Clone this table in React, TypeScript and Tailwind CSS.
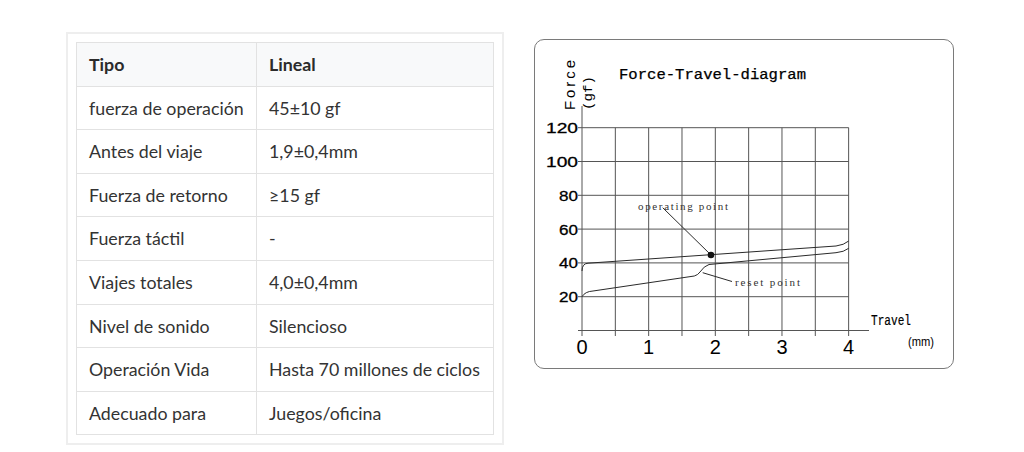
const rows: [string, string][] = [
  ["fuerza de operación", "45±10 gf"],
  ["Antes del viaje", "1,9±0,4mm"],
  ["Fuerza de retorno", "≥15 gf"],
  ["Fuerza táctil", "-"],
  ["Viajes totales", "4,0±0,4mm"],
  ["Nivel de sonido", "Silencioso"],
  ["Operación Vida", "Hasta 70 millones de ciclos"],
  ["Adecuado para", "Juegos/oficina"],
];

const gx = [0, 1, 2, 3, 4, 5, 6, 7, 8].map((i) => 47 + i * 33.33);
const yv = (v: number) => 290.5 - v * 1.69;

function Diagram() {
  return (
    <svg width="418" height="328" viewBox="0 0 418 328" className="block">
      {/* grid */}
      <g stroke="#555" strokeWidth="1" fill="none">
        {gx.map((x) => (
          <line key={x} x1={x} y1={x === 47 ? 66 : 87.7} x2={x} y2={296} />
        ))}
        {[20, 40, 60, 80, 100, 120].map((v) => (
          <line key={v} x1={43} y1={yv(v)} x2={313.7} y2={yv(v)} />
        ))}
        <line x1={43} y1={290.5} x2={334} y2={290.5} />
      </g>

      {/* curves */}
      <g stroke="#2a2a2a" strokeWidth="1" fill="none">
        <path d="M47 231 Q47 223.6 53 223.2 L301 206 Q309 205 313.7 201" />
        <path d="M47 256.7 Q50 251.5 58 251 L159.3 236 Q163 235 165 232 Q169 226 174 224.5 L301 212.7 Q309 212 313.7 208.3" />
        <line x1={127.7} y1={167.7} x2={176} y2={215} />
        <line x1={167.7} y1={232.7} x2={197} y2={241.5} />
      </g>
      <circle cx={176} cy={215} r={3.3} fill="#111" />

      {/* y labels */}
      <g fontFamily="'Liberation Sans', Arial, sans-serif" fontSize="15.5" fill="#000" stroke="#000" strokeWidth="0.3" textAnchor="end">
        {[20, 40, 60, 80, 100, 120].map((v) => (
          <text key={v} x={43} y={yv(v) + 5.4} textLength={v >= 100 ? 32 : 19} lengthAdjust="spacingAndGlyphs">
            {v}
          </text>
        ))}
      </g>

      {/* x labels */}
      <g fontFamily="'Liberation Sans', Arial, sans-serif" fontSize="20" fill="#000" textAnchor="middle">
        {[0, 1, 2, 3, 4].map((n) => (
          <text key={n} x={47 + n * 66.67} y={314}>
            {n}
          </text>
        ))}
      </g>

      {/* titles */}
      <text x={84} y={38.7} fontFamily="'Liberation Mono', monospace" fontSize="14.5" fill="#000" stroke="#000" strokeWidth="0.25" textLength={187} lengthAdjust="spacingAndGlyphs">
        Force-Travel-diagram
      </text>
      <text transform="translate(39.5 70) rotate(-90)" fontFamily="'Liberation Sans', Arial, sans-serif" fontSize="15" fill="#000" textLength={50} lengthAdjust="spacing">
        Force
      </text>
      <text transform="translate(56.5 70) rotate(-90)" fontFamily="'Liberation Mono', monospace" fontSize="13" fill="#000" textLength={34} lengthAdjust="spacingAndGlyphs">
        (gf)
      </text>
      <text x={336} y={285} fontFamily="'Liberation Mono', monospace" fontSize="14.5" fill="#000" stroke="#000" strokeWidth="0.2" textLength={40} lengthAdjust="spacingAndGlyphs">
        Travel
      </text>
      <text x={373} y={306} fontFamily="'Liberation Sans', Arial, sans-serif" fontSize="12" fill="#000" textLength={26} lengthAdjust="spacingAndGlyphs">
        (mm)
      </text>
      <text x={103} y={170} fontFamily="'Liberation Serif', serif" fontSize="11" fill="#333" textLength={90} lengthAdjust="spacing">
        operating point
      </text>
      <text x={200} y={246} fontFamily="'Liberation Serif', serif" fontSize="11" fill="#333" textLength={65} lengthAdjust="spacing">
        reset point
      </text>
    </svg>
  );
}

export default function App() {
  return (
    <div className="w-[1024px] h-[452px] bg-white flex items-start gap-[30px] pl-[66px] pt-[32px] font-['Lato',sans-serif] text-[17.8px] text-[#333]">
      {/* Spec table */}
      <div className="border-2 border-[#eeeeee] p-2">
        <div className="w-[418px] border border-[#e2e2e2]">
          <div className="flex h-[42.6px] items-center bg-[#f8f9fa] font-bold text-[#2b2b2b]">
            <div className="w-[180px] h-full flex items-center px-3 border-r border-[#e2e2e2]">Tipo</div>
            <div className="flex-1 px-3">Lineal</div>
          </div>
          {rows.map(([k, v]) => (
            <div key={k} className="flex h-[43.6px] items-stretch border-t border-[#e2e2e2]">
              <div className="w-[180px] flex items-center px-3 border-r border-[#e2e2e2]">{k}</div>
              <div className="flex-1 flex items-center px-3">{v}</div>
            </div>
          ))}
        </div>
      </div>

      {/* Force travel diagram */}
      <div className="mt-[7px] w-[420px] h-[330px] rounded-[10px] border border-[#7a7a7a] bg-white overflow-hidden">
        <Diagram />
      </div>
    </div>
  );
}
